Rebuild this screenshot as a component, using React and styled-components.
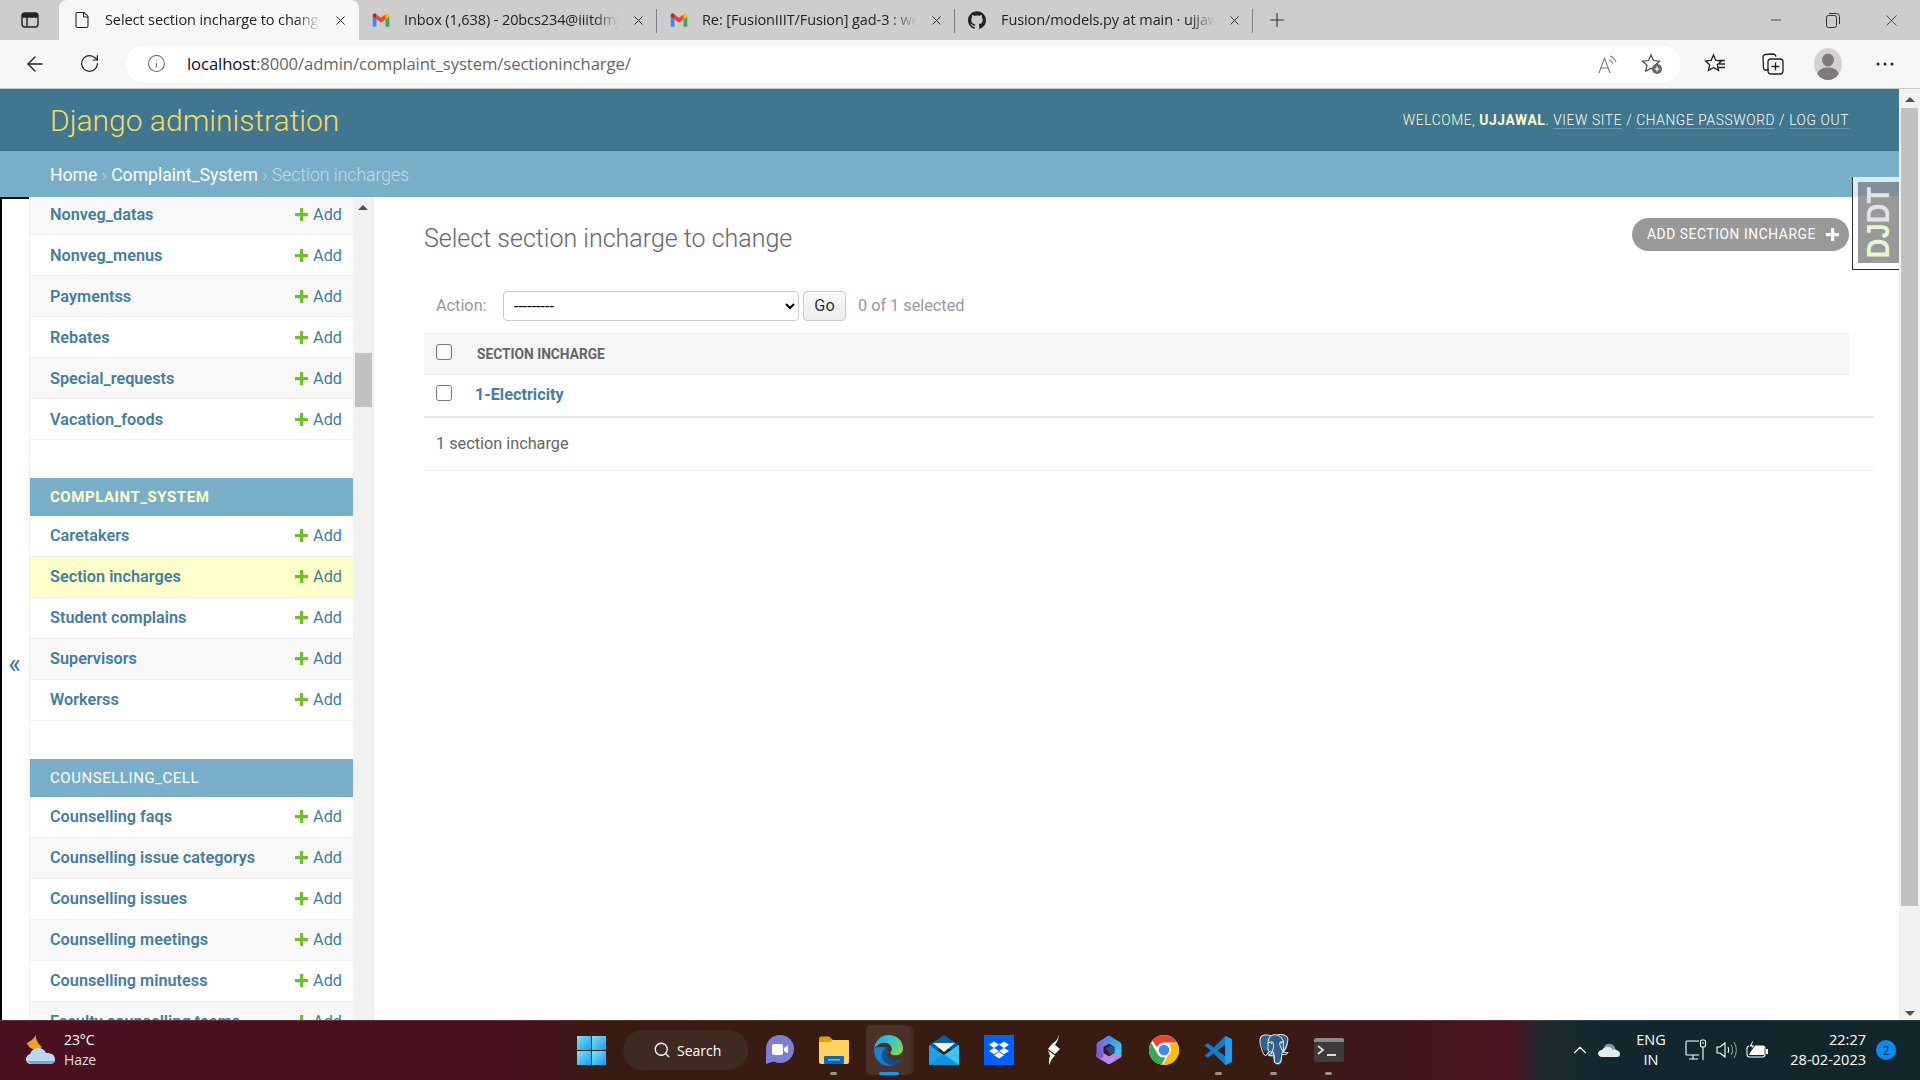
import React from "react";
import styled, { createGlobalStyle } from "styled-components";
import { ArrowLeft, RotateCw, Info, X, Plus, File, ChevronUp, Search, Minus } from "lucide-react";
import { SiGithub, SiDropbox, SiPostgresql } from "react-icons/si";

const Global = createGlobalStyle`
  html, body { margin: 0; padding: 0; width: 1920px; height: 1080px; overflow: hidden; background: #fff; }
  * { box-sizing: border-box; }
  #root { width: 1920px; height: 1080px; }
`;

const UI = `"Open Sans", "Noto Sans", sans-serif`;
const DJ = `Roboto, "Liberation Sans", sans-serif`;

const Screen = styled.div`
  position: relative;
  width: 1920px;
  height: 1080px;
  display: flex;
  flex-direction: column;
  overflow: hidden;
`;

/* browser chrome */
const TabStrip = styled.div`
  height: 40px;
  flex: none;
  background: #cdcdcd;
  display: flex;
  align-items: stretch;
  font-family: ${UI};
  font-size: 14.5px;
  letter-spacing: -0.1px;
  color: #222;
`;
const TabToggle = styled.div`
  width: 59px;
  display: flex;
  align-items: center;
  justify-content: center;
`;
const Tab = styled.div`
  position: relative;
  width: ${(p) => (p.$active ? "300px" : "298px")};
  display: flex;
  align-items: center;
  padding-left: ${(p) => (p.$active ? "14px" : "13px")};
  background: ${(p) => (p.$active ? "#f7f7f7" : "transparent")};
  border-radius: 8px 8px 0 0;
  &::after {
    content: "";
    display: ${(p) => (p.$sep ? "block" : "none")};
    position: absolute;
    right: 0;
    top: 9px;
    width: 1px;
    height: 24px;
    background: #808080;
  }
`;
const TabIcon = styled.span`
  width: 18px;
  height: 18px;
  flex: none;
  display: flex;
  align-items: center;
  justify-content: center;
`;
const TabTitle = styled.span`
  flex: 1;
  margin-left: ${(p) => (p.$wide ? 15 : 14)}px;
  padding-bottom: 2px;
  white-space: nowrap;
  overflow: hidden;
  -webkit-mask-image: linear-gradient(90deg, #000 88%, transparent 100%);
  mask-image: linear-gradient(90deg, #000 88%, transparent 100%);
`;
const TabClose = styled.span`
  width: 38px;
  flex: none;
  display: flex;
  align-items: center;
  justify-content: center;
`;
const NewTab = styled.div`
  width: 48px;
  display: flex;
  align-items: center;
  justify-content: center;
`;
const WinControls = styled.div`
  margin-left: auto;
  display: flex;
  align-items: center;
`;
const WinBtn = styled.div`
  width: 57.5px;
  display: flex;
  justify-content: center;
  &:last-child { width: 58px; }
`;

const ToolBar = styled.div`
  height: 49px;
  flex: none;
  background: #f7f7f7;
  border-bottom: 1px solid #c9c9c9;
  display: flex;
  align-items: center;
  padding-bottom: 1px;
`;
const ToolBtn = styled.div`
  width: ${(p) => p.$w || 55}px;
  flex: none;
  display: flex;
  justify-content: center;
  align-items: center;
`;
const AddressBar = styled.div`
  width: 1556px;
  height: 38px;
  margin-left: 8px;
  flex: none;
  background: #fff;
  border-radius: 19px;
  display: flex;
  align-items: center;
  padding-left: 22px;
  font-family: ${UI};
  font-size: 16.7px;
  color: #666;
  box-shadow: 0 0 2px rgba(0,0,0,.08);
`;
const UrlHost = styled.span`
  color: #111;
`;
const Url = styled.span`
  margin-left: 21px;
  letter-spacing: -0.1px;
`;
const AddressEnd = styled.div`
  margin-left: auto;
  display: flex;
  align-items: center;
  gap: 23px;
  padding-right: 18px;
`;

/* page */
const Viewport = styled.div`
  flex: 1;
  min-height: 0;
  display: flex;
`;
const Page = styled.div`
  flex: 1;
  min-width: 0;
  display: flex;
  flex-direction: column;
  font-family: ${DJ};
`;
const Header = styled.header`
  height: 62px;
  flex: none;
  background: #417690;
  display: flex;
  align-items: center;
  justify-content: space-between;
  padding: 0 50px 0 50px;
`;
const Brand = styled.h1`
  margin: 0;
  font-size: 30px;
  font-weight: 300;
  color: #f5dd5d;
`;
const UserTools = styled.div`
  font-size: 13.75px;
  font-weight: 300;
  letter-spacing: 0.625px;
  text-transform: uppercase;
  color: #ffc;
`;
const UserName = styled.strong`
  font-weight: 700;
`;
const ToolLink = styled.a`
  color: #fff;
  border-bottom: 1px solid rgba(255,255,255,.25);
`;
const Crumbs = styled.nav`
  height: 46px;
  flex: none;
  background: #79aec8;
  display: flex;
  align-items: center;
  padding: 2px 0 0 50px;
  font-size: 17.6px;
  font-weight: 300;
  color: #c4dce8;
`;
const Crumb = styled.a`
  color: #fff;
  font-weight: 400;
`;
const Body = styled.div`
  flex: 1;
  min-height: 0;
  display: flex;
  background: #fff;
`;
const NavToggle = styled.div`
  width: 29px;
  flex: none;
  border-left: 2px solid #000;
  border-top: 2px solid #000;
  display: flex;
  align-items: center;
  justify-content: center;
  padding: 110px 2px 0 0;
  color: #417690;
  font-size: 27px;
  line-height: 1;
`;
const Sidebar = styled.aside`
  width: 345px;
  flex: none;
  display: flex;
  border-left: 1px solid #eee;
  border-right: 1px solid #eaeaea;
`;
const SideList = styled.div`
  width: 323px;
  flex: none;
  overflow: hidden;
`;
const SideScroll = styled.div`
  width: 20px;
  flex: none;
  background: #f1f1f1;
  display: flex;
  flex-direction: column;
  align-items: center;
  padding-top: 8px;
`;
const ArrowUp = styled.div`
  width: 0;
  height: 0;
  border-left: 5px solid transparent;
  border-right: 5px solid transparent;
  border-bottom: 5px solid #505050;
`;
const SideThumb = styled.div`
  width: 17px;
  height: 54px;
  margin-top: 143px;
  background: #c1c1c1;
`;
const SideInner = styled.div`
  margin-top: -3px;
`;
const Module = styled.section`
  margin-bottom: 38px;
`;
const Caption = styled.div`
  height: 38px;
  display: flex;
  align-items: center;
  padding-left: 20px;
  background: #79aec8;
  font-size: 15px;
  letter-spacing: 0.55px;
  text-transform: uppercase;
  font-weight: ${(p) => (p.$current ? 700 : 400)};
  color: ${(p) => (p.$current ? "#ffc" : "#fff")};
`;
const Row = styled.div`
  height: 41px;
  display: flex;
  align-items: center;
  justify-content: space-between;
  padding: 0 11px ${(p) => (p.$lift ? "2px" : "0")} 20px;
  border-bottom: 1px solid #eee;
  background: ${(p) => (p.$current ? "#ffc" : p.$alt ? "#f8f8f8" : "#fff")};
`;
const RowName = styled.a`
  font-size: 16.25px;
  font-weight: 600;
  color: #447e9b;
`;
const RowAdd = styled.a`
  display: flex;
  align-items: center;
  gap: 5px;
  font-size: 16.25px;
  font-weight: 400;
  color: #447e9b;
`;
const Content = styled.main`
  flex: 1;
  min-width: 0;
  padding: 21px 25px 0 50px;
  display: flex;
  flex-direction: column;
`;
const TitleRow = styled.div`
  height: 33px;
  display: flex;
  align-items: center;
  justify-content: space-between;
  padding-right: 25px;
`;
const Title = styled.h1`
  margin: 0;
  padding-top: 7px;
  font-size: 25px;
  font-weight: 300;
  color: #666;
`;
const AddBtn = styled.a`
  height: 33px;
  width: 217px;
  border-radius: 17px;
  background: #999;
  color: #fff;
  display: flex;
  align-items: center;
  justify-content: space-between;
  padding: 0 10px 1px 15px;
  font-size: 13.75px;
  font-weight: 400;
  letter-spacing: 0.6px;
  text-transform: uppercase;
  white-space: nowrap;
`;
const Actions = styled.div`
  height: 30px;
  margin-top: 40px;
  display: flex;
  align-items: center;
  padding-left: 12px;
  font-size: 16.25px;
  color: #999;
`;
const ActionLabel = styled.span`
  width: 67px;
  flex: none;
  padding-bottom: 2px;
`;
const ActionSelect = styled.select`
  width: 296px;
  height: 30px;
  flex: none;
  background: #fff;
  border: 1px solid #ccc;
  border-radius: 4px;
  padding: 0 6px;
  font-family: ${DJ};
  font-size: 16px;
  color: #000;
`;
const GoBtn = styled.button`
  width: 43px;
  height: 30px;
  margin-left: 4px;
  flex: none;
  border: 1px solid #ccc;
  border-radius: 4px;
  background: linear-gradient(#f8f8f8, #ececec);
  font-family: ${DJ};
  font-size: 16.25px;
  color: #333;
  padding: 0 0 2px;
`;
const Selected = styled.span`
  margin-left: 12px;
  padding-bottom: 2px;
`;
const Results = styled.div`
  margin-top: 12px;
  border-bottom: 2px solid #e6e6e6;
`;
const HeadRow = styled.div`
  height: 42px;
  margin-right: 25px;
  background: #f6f6f6;
  border-top: 1px solid #eee;
  border-bottom: 1px solid #eee;
  display: flex;
  align-items: center;
  padding: 0 0 0 12px;
  font-size: 13.75px;
  font-weight: 700;
  color: #666;
  text-transform: uppercase;
`;
const BodyRow = styled.div`
  height: 41px;
  margin-right: 25px;
  display: flex;
  align-items: center;
  padding: 0 0 2px 12px;
`;
const Check = styled.input.attrs({ type: "checkbox" })`
  width: 16px;
  height: 16px;
  margin: -4px 0 0 0;
  flex: none;
`;
const HeadLabel = styled.span`
  margin-left: 25px;
`;
const EntryLink = styled.a`
  margin-left: 23px;
  font-size: 16.25px;
  font-weight: 700;
  color: #447e9b;
`;
const Paginator = styled.div`
  height: 53px;
  display: flex;
  align-items: center;
  padding: 0 0 2px 12px;
  border-bottom: 1px solid #eee;
  font-size: 16.25px;
  color: #666;
`;
const PageScroll = styled.div`
  width: 21px;
  flex: none;
  background: #f1f1f1;
  display: flex;
  flex-direction: column;
  align-items: center;
  padding-top: 8px;
`;
const PageThumb = styled.div`
  width: 17px;
  height: 798px;
  margin-top: 6px;
  background: #c1c1c1;
`;
const ArrowDown = styled.div`
  width: 0;
  height: 0;
  margin-top: auto;
  margin-bottom: 4px;
  border-left: 5px solid transparent;
  border-right: 5px solid transparent;
  border-top: 5px solid #505050;
`;
const DjHandle = styled.div`
  position: absolute;
  left: 1852px;
  top: 177px;
  width: 47px;
  height: 93px;
  padding: 5px 0 6px 5px;
  background: rgba(255,255,255,.75);
  border-left: 1px solid #333;
  border-bottom: 1px solid #333;
`;
const DjInner = styled.div`
  height: 100%;
  background: linear-gradient(#7f9099 0, #7f9099 14px, #999 14px);
  display: flex;
  align-items: center;
  justify-content: center;
  overflow: hidden;
`;
const DjText = styled.div`
  transform: rotate(-90deg) scaleX(0.88);
  font-family: "Liberation Sans", sans-serif;
  font-weight: 700;
  font-size: 31px;
  line-height: 1;
  white-space: nowrap;
  color: #dfe5e8;
`;
const DjGreen = styled.span`
  color: #e6f7d3;
`;

/* taskbar */
const Taskbar = styled.footer`
  height: 60px;
  flex: none;
  display: flex;
  align-items: center;
  color: #fff;
  font-family: ${UI};
  background: linear-gradient(90deg, #4a1120 0, #4a1120 500px, #47131c 540px, #3b1b14 600px, #381c12 800px, #381c12 1250px, #40171a 1380px, #4a1420 1510px, #1e2a32 1545px, #12282e 1600px, #12262c 1920px);
  box-shadow: inset 0 1px 0 rgba(255,255,255,.12);
`;
const Weather = styled.div`
  flex: 0 0 577px;
  display: flex;
  align-items: center;
  padding-left: 25px;
`;
const WeatherText = styled.div`
  margin-left: 7px;
  font-size: 14px;
  letter-spacing: -0.1px;
  line-height: 20px;
`;
const WeatherSub = styled.div`
  color: #e4dcdc;
`;
const WinLogo = styled.div`
  width: 29px;
  height: 29px;
  flex: none;
  display: grid;
  grid-template-columns: 1fr 1fr;
  gap: 1px;
`;
const WinPane = styled.span`
  background: linear-gradient(135deg, #7fe0f7, #0f9ff0);
`;
const SearchPill = styled.div`
  width: 125px;
  height: 40px;
  margin-left: 17px;
  margin-right: 3px;
  flex: none;
  border-radius: 20px;
  background: #3f2b22;
  display: flex;
  align-items: center;
  padding-left: 30px;
  gap: 6px;
  font-size: 14px;
`;
const Slot = styled.div`
  position: relative;
  width: 55px;
  height: 60px;
  flex: none;
  display: flex;
  align-items: center;
  justify-content: center;
`;
const ActiveBox = styled.div`
  position: absolute;
  left: 5px;
  top: 5px;
  width: 44px;
  height: 50px;
  border-radius: 5px;
  background: #4a3229;
  box-shadow: 5px 0 0 -1px #43291f;
`;
const SlotIcon = styled.div`
  position: relative;
  display: flex;
`;
const Dot = styled.span`
  position: absolute;
  left: 50%;
  bottom: 5px;
  width: ${(p) => (p.$active ? 20 : 7)}px;
  height: 3px;
  margin-left: ${(p) => (p.$active ? -10 : -4)}px;
  border-radius: 2px;
  background: ${(p) => (p.$active ? "#0a9bf5" : "#9a928c")};
`;
const Tray = styled.div`
  margin-left: auto;
  display: flex;
  align-items: center;
  padding-right: 24px;
`;
const TrayItem = styled.div`
  width: ${(p) => p.$w}px;
  flex: none;
  display: flex;
  align-items: center;
  justify-content: center;
`;
const TrayText = styled.div`
  width: ${(p) => p.$w}px;
  flex: none;
  font-size: 14.5px;
  line-height: 20px;
  white-space: nowrap;
  text-align: ${(p) => p.$align};
`;
const Badge = styled.div`
  width: 20px;
  height: 20px;
  margin-left: 10px;
  border-radius: 50%;
  background: #0b8cf2;
  color: #06233a;
  font-size: 12px;
  display: flex;
  align-items: center;
  justify-content: center;
`;

/* drawings */
const GreenPlus = ({ color = "#70bf2b", s = 13 }) => (
  <svg width={s} height={s} viewBox="0 0 13 13"><path fill={color} d="M5 0h3.2v5H13v3.2H8.2V13H5V8.2H0V5h5z" /></svg>
);
const Gmail = () => (
  <svg width="20" height="16" viewBox="0 0 24 19">
    <path fill="#4285f4" d="M1 18.5h5V8.5L1 5z" />
    <path fill="#34a853" d="M18 18.5h5V5l-5 3.5z" />
    <path fill="#fbbc04" d="M18 2v6.5L23 5V3c0-2-2.400-3-4-1.800z" />
    <path fill="#ea4335" d="M6 8.500V2l6 4.500L18 2v6.500l-6 4.500z" />
    <path fill="#c5221f" d="M1 3v2l5 3.500V2L5 1.200C3.400 0 1 1 1 3z" />
  </svg>
);
const TabsIcon = () => (
  <svg width="18" height="18" viewBox="0 0 18 18" fill="none" stroke="#222" strokeWidth="1.4">
    <rect x="1" y="2" width="16" height="14" rx="3" />
    <path d="M6 2.500v13" />
    <path fill="#222" d="M2 3h14v3H2z" />
  </svg>
);
const Restore = () => (
  <svg width="14" height="15" viewBox="0 0 14 15" fill="none" stroke="#333" strokeWidth="1">
    <rect x="0.500" y="2.500" width="10" height="12" rx="2" />
    <path d="M3 .5h7.500a3 3 0 0 1 3 3V11" />
  </svg>
);
const ReadAloud = () => (
  <svg width="20" height="20" viewBox="0 0 20 20" fill="none" stroke="#777" strokeWidth="1.100">
    <path d="M1 19 6.500 4l5.500 15M3 14h7" />
    <path d="M12 2c3 1 5 3 6 6M11 6c2 .5 3 1.500 4 3.500" />
  </svg>
);
const FavAdd = () => (
  <svg width="22" height="22" viewBox="0 0 22 22">
    <path fill="none" stroke="#444" strokeWidth="1.200" d="M10 2l2.500 5.500 6 .7-4.400 4 1.200 6L10 15.300 4.800 18.200 6 12.200 1.500 8.200l6-.7z" />
    <circle cx="16" cy="16" r="5" fill="#666" />
    <path stroke="#fff" strokeWidth="1.200" d="M16 13.500v5M13.500 16h5" />
  </svg>
);
const Favs = () => (
  <svg width="22" height="22" viewBox="0 0 22 22" fill="none" stroke="#222" strokeWidth="1.300">
    <path d="M9.500 2l2.300 5.300 5.700.6-4.200 3.800 1.200 5.700-5-3-5 3 1.200-5.700L1.500 7.900l5.700-.6z" />
    <path d="M14 7.500h7M15 11h6M14 14.500h7" />
  </svg>
);
const Collections = () => (
  <svg width="22" height="22" viewBox="0 0 22 22" fill="none" stroke="#222" strokeWidth="1.300">
    <path d="M7 17 3.500 17C2 17 1.500 16 1.500 15L1 4c0-1.500 1-2.500 2.500-2.500L11 1c1.500 0 2.500 1 3 2.500" />
    <rect x="6" y="6" width="15" height="15" rx="3" />
    <path d="M13.500 9.500v8M9.500 13.500h8" />
  </svg>
);
const Profile = () => (
  <svg width="28" height="32" viewBox="0 0 28 32">
    <ellipse cx="14" cy="16" rx="14" ry="16" fill="#d4d2ce" />
    <ellipse cx="14" cy="12" rx="6" ry="6.500" fill="#807b78" />
    <path fill="#807b78" d="M3.500 26c1-5 5-6.500 10.500-6.500S23.500 21 24.500 26C22 30 18 32 14 32S6 30 3.500 26z" />
  </svg>
);
const Dots = () => (
  <svg width="18" height="4" viewBox="0 0 18 4" fill="#222"><circle cx="2" cy="2" r="1.500" /><circle cx="9" cy="2" r="1.500" /><circle cx="16" cy="2" r="1.500" /></svg>
);
const WeatherIcon = () => (
  <svg width="32" height="32" viewBox="0 0 32 32">
    <path fill="#f2a11e" d="M11 0c-1 4-5 7-9 9 1 4 5 7 11 7l4-3c-4-3-7-8-6-13z" />
    <path fill="#bcd6f2" d="M6 30c-3 0-5-2-5-5 0-2.500 2-4.500 4-5 1-3 4-6 8-6 4 0 7 2 8 5 4-.5 9 1.500 9 6 0 3-2 5-5 5z" />
    <path fill="#7fa3d6" d="M2 27c2 2 4 3 6 3h17c2 0 4-1 5-3z" />
  </svg>
);
const TeamsIcon = () => (
  <svg width="30" height="30" viewBox="0 0 30 30">
    <circle cx="16" cy="14" r="14" fill="#7b7fd8" />
    <path fill="#7b7fd8" d="M2 16v13l9-3z" />
    <rect x="8" y="9" width="11" height="11" rx="2" fill="#fff" />
    <path fill="#fff" d="M20 13l4-2.500v8L20 16z" />
  </svg>
);
const FolderIcon = () => (
  <svg width="30" height="28" viewBox="0 0 30 28">
    <path fill="#e0a100" d="M0 3c0-1.500 1-2.500 2-2.500h8L14 4h16v4H0z" />
    <path fill="#fcd45d" d="M0 6h11l3-2h14c1 0 2 1 2 2v20c0 1-1 2-2 2H2c-1 0-2-1-2-2z" />
    <rect x="5" y="20" width="20" height="8" rx="1" fill="#0c69b0" />
    <rect x="9" y="23" width="12" height="1.600" fill="#5db8f0" />
  </svg>
);
const EdgeIcon = () => (
  <svg width="31" height="31" viewBox="0 0 32 32">
    <defs>
      <linearGradient id="eA" x1="0" y1="0" x2="1" y2="0.600"><stop offset="0" stopColor="#1aa3e0" /><stop offset="0.550" stopColor="#37c6d0" /><stop offset="1" stopColor="#7ad84f" /></linearGradient>
      <linearGradient id="eB" x1="0" y1="0" x2="0.600" y2="1"><stop offset="0" stopColor="#1087d8" /><stop offset="1" stopColor="#0d7bc7" /></linearGradient>
    </defs>
    <path fill="url(#eB)" d="M1 15C1 25 8 32 17 32c2 0 4-.5 6-1.500C16 31 10 26 10 20c0-3 2-6 4-7C8 12 3 12 1 15z" />
    <path fill="#0e4f94" d="M14 13c-3 1-5 4-5 8 0 6 6 10.500 13 10 3-1 6-3 8-6.500-3 2-7 2.500-10 1-4-1.500-6-5-5-8 .5-1.500 1-3 -1-4.500z" />
    <path fill="url(#eA)" d="M1 15C2 6 8 0 16 0c9 0 15 6 15 14 0 4-3 7-7.500 7-3 0-5.500-1-5.500-2.500 0-1.500 1.500-1.500 1.500-4C19.500 11 16 8 12 8 7 8 3 11 1 15z" />
  </svg>
);
const MailIcon = () => (
  <svg width="30" height="30" viewBox="0 0 30 30">
    <path fill="#0b5ea8" d="M0 10 15 0l15 10v4H0z" />
    <path fill="#f5f5f5" d="M4 8h22l-11 9z" />
    <path fill="#1aa3e8" d="M0 10l15 10 15-10v20H0z" />
    <path fill="#38c6f5" d="M30 10v20L15 20z" />
    <path fill="#0e84d4" d="M0 30l15-11 15 11z" opacity=".55" />
  </svg>
);
const SwordIcon = () => (
  <svg width="14" height="32" viewBox="0 0 14 32" fill="#fff">
    <path d="M12 0C11 4 10 7 5 10L1 15l7 5 5-5-5-4C10 8 12 4 12 0z" />
    <path d="M1 16.500l7 5c-3 3-5 6-6 10 0-4 0-7 1-10z" />
  </svg>
);
const OfficeIcon = () => (
  <svg width="28" height="30" viewBox="0 0 28 30" fill="none" strokeWidth="7" strokeLinecap="round" strokeLinejoin="round">
    <defs>
      <linearGradient id="oA" x1="0" y1="0" x2="1" y2="1"><stop offset="0" stopColor="#3f8fe8" /><stop offset="1" stopColor="#3fc4ea" /></linearGradient>
      <linearGradient id="oB" x1="0" y1="1" x2="1" y2="0"><stop offset="0" stopColor="#8258d8" /><stop offset="1" stopColor="#6f8ce8" /></linearGradient>
    </defs>
    <path stroke="#b88ae6" d="M5 20l9 5.500 9-5.500" />
    <path stroke="url(#oB)" d="M5 20V10l9-5.500" />
    <path stroke="url(#oA)" d="M14 4.500l9 5.500v7" />
    <path fill="#1d4f96" stroke="none" d="M11 13l5-2.500 3 2v5l-4 2.500z" />
  </svg>
);
const ChromeIcon = () => (
  <svg width="30" height="30" viewBox="0 0 48 48">
    <circle cx="24" cy="24" r="24" fill="#fff" />
    <path fill="#ea4335" d="M24 0a24 24 0 0 1 20.800 12H24a12 12 0 0 0-11.300 8L5.200 8.500A24 24 0 0 1 24 0z" />
    <path fill="#34a853" d="M3.200 12 13.600 30a12 12 0 0 0 13.200 5.700L19.500 47.600A24 24 0 0 1 3.200 12z" />
    <path fill="#fbbc04" d="M44.800 12A24 24 0 0 1 22 48l10.400-18a12 12 0 0 0-.4-14z" />
    <circle cx="24" cy="24" r="11" fill="#fff" />
    <circle cx="24" cy="24" r="8.500" fill="#4285f4" />
  </svg>
);
const CodeIcon = () => (
  <svg width="31" height="31" viewBox="0 0 32 32">
    <path fill="#0a7fd0" fillRule="evenodd" d="M23 1 11 13 5 8.500 1.500 10.500 8 16l-6.500 5.500L5 23.500 11 19l12 12 7-3.500V4.500zM23 10l-8 6 8 6z" />
    <path fill="#1f9cf0" d="M23 1l7 3.500v23L23 31z" />
  </svg>
);
const PgIcon = () => (
  <svg width="30" height="32" viewBox="0 0 30 32">
    <path fill="#33618f" d="M4 1c5-1 7 0 9 1 3-1 8-2 13 0 3 2 4 7 2 12-1 3-3 5-5 5v7c0 3-2 6-5 5-3-1-3-4-3-7-3 0-6-3-7-6-3 0-6-6-7-11C0 3 2 1 4 1z" />
    <foreignObject x="0" y="0" width="30" height="32">
      <SiPostgresql size={30} color="#f4f6f8" />
    </foreignObject>
  </svg>
);
const TerminalIcon = () => (
  <svg width="30" height="24" viewBox="0 0 30 24">
    <rect width="30" height="24" rx="2" fill="#3c3c3c" />
    <path d="M0 2a2 2 0 0 1 2-2h26a2 2 0 0 1 2 2v2H0z" fill="#8a8a8a" />
    <path d="M4 8l5 4-5 4" fill="none" stroke="#ddd" strokeWidth="1.800" />
    <rect x="13" y="16" width="9" height="2" fill="#ddd" />
  </svg>
);
const CloudIcon = () => (
  <svg width="22" height="14" viewBox="0 0 22 14">
    <path fill="#8f9a9e" d="M6 4a6 6 0 0 1 11 1l1 2-8 2z" />
    <path fill="#e8eced" d="M4 14c-2 0-4-1.500-4-3.500S2 7 4 7c1-2 3-3 6-3 2 0 4 1 5 3 3-1 7 1 7 4 0 2-1 3-3 3z" />
  </svg>
);
const NetworkIcon = () => (
  <svg width="22" height="22" viewBox="0 0 22 22" fill="none" stroke="#fff" strokeWidth="1.100">
    <path d="M14 2H2a1 1 0 0 0-1 1v12a1 1 0 0 0 1 1h12M8 16v4M4 20h9" />
    <rect x="15.500" y="1" width="5" height="7" rx="1.500" />
    <path d="M18 8v13M17 4h2" />
  </svg>
);
const VolumeIcon = () => (
  <svg width="22" height="20" viewBox="0 0 22 20" fill="none" stroke="#fff" strokeWidth="1.100">
    <path d="M1 7h3l5-4v14l-5-4H1z" />
    <path d="M12 7c1 2 1 4 0 6" />
    <path stroke="#8a9598" d="M15 5c2 3 2 7 0 10M18 2c3 5 3 11 0 16" />
  </svg>
);
const BatteryIcon = () => (
  <svg width="22" height="18" viewBox="0 0 22 18">
    <rect x="1" y="5" width="18" height="11" rx="2.500" fill="none" stroke="#fff" strokeWidth="1.100" />
    <path fill="#fff" d="M20 8h2v5h-2zM3 14l4-9h11v9z" />
    <path fill="#fff" stroke="#12282e" d="M6 0 3 6h3L4 11l5-7H6l2-4z" />
  </svg>
);

const MODULES = [
  { rows: ["Nonveg_datas", "Nonveg_menus", "Paymentss", "Rebates", "Special_requests", "Vacation_foods"], altFirst: true },
  { name: "Complaint_System", current: true, rows: ["Caretakers", "Section incharges", "Student complains", "Supervisors", "Workerss"] },
  { name: "Counselling_Cell", rows: ["Counselling faqs", "Counselling issue categorys", "Counselling issues", "Counselling meetings", "Counselling minutess", "Faculty counselling teams"] },
];

const TABS = [
  { title: "Select section incharge to change", icon: <File size={18} color="#222" strokeWidth={1.4} />, active: true },
  { title: "Inbox (1,638) - 20bcs234@iiitdmj.ac.in", icon: <Gmail />, sep: true },
  { title: "Re: [FusionIIIT/Fusion] gad-3 : web", icon: <Gmail />, sep: true },
  { title: "Fusion/models.py at main · ujjawal", icon: <SiGithub size={20} color="#222" />, sep: true, wide: true },
];

const SLOTS = [
  { key: "teams", icon: <TeamsIcon /> },
  { key: "folder", icon: <FolderIcon />, dot: true },
  { key: "edge", icon: <EdgeIcon />, active: true },
  { key: "mail", icon: <MailIcon /> },
  { key: "dropbox", icon: <SiDropbox size={30} color="#fff" style={{ background: "#0061fe", padding: 5 }} /> },
  { key: "sword", icon: <SwordIcon /> },
  { key: "office", icon: <OfficeIcon /> },
  { key: "chrome", icon: <ChromeIcon /> },
  { key: "code", icon: <CodeIcon />, dot: true },
  { key: "pg", icon: <PgIcon />, dot: true },
  { key: "term", icon: <TerminalIcon />, dot: true },
];

export default function App() {
  return (
    <Screen>
      <Global />
      <TabStrip>
        <TabToggle><TabsIcon /></TabToggle>
        {TABS.map((t) => (
          <Tab key={t.title} $active={t.active} $sep={t.sep}>
            <TabIcon>{t.icon}</TabIcon>
            <TabTitle $wide={t.wide}>{t.title}</TabTitle>
            <TabClose><X size={15} color="#222" strokeWidth={1.500} /></TabClose>
          </Tab>
        ))}
        <NewTab><Plus size={22} color="#333" strokeWidth={1.200} /></NewTab>
        <WinControls>
          <WinBtn><Minus size={16} color="#333" strokeWidth={1.200} /></WinBtn>
          <WinBtn><Restore /></WinBtn>
          <WinBtn><X size={19} color="#333" strokeWidth={1.100} /></WinBtn>
        </WinControls>
      </TabStrip>
      <ToolBar>
        <ToolBtn $w={69}><ArrowLeft size={24} color="#222" strokeWidth={1.400} /></ToolBtn>
        <ToolBtn $w={41}><RotateCw size={21} color="#222" strokeWidth={1.400} /></ToolBtn>
        <ToolBtn $w={7} />
        <AddressBar>
          <Info size={19} color="#666" strokeWidth={1.300} />
          <Url><UrlHost>localhost</UrlHost>:8000/admin/complaint_system/sectionincharge/</Url>
          <AddressEnd><ReadAloud /><FavAdd /></AddressEnd>
        </AddressBar>
        <ToolBtn $w={68}><Favs /></ToolBtn>
        <ToolBtn $w={47}><Collections /></ToolBtn>
        <ToolBtn $w={64}><Profile /></ToolBtn>
        <ToolBtn $w={49}><Dots /></ToolBtn>
      </ToolBar>
      <Viewport>
        <Page>
          <Header>
            <Brand>Django administration</Brand>
            <UserTools>
              Welcome, <UserName>ujjawal</UserName>. <ToolLink>View site</ToolLink> / <ToolLink>Change password</ToolLink> / <ToolLink>Log out</ToolLink>
            </UserTools>
          </Header>
          <Crumbs>
            <Crumb>Home</Crumb>&nbsp;›&nbsp;<Crumb>Complaint_System</Crumb>&nbsp;›&nbsp;Section incharges
          </Crumbs>
          <Body>
            <NavToggle>«</NavToggle>
            <Sidebar>
              <SideList>
                <SideInner>
                  {MODULES.map((m, mi) => (
                    <Module key={mi}>
                      {m.name && <Caption $current={m.current}>{m.name}</Caption>}
                      {m.rows.map((r, i) => (
                        <Row key={r} $lift={!!m.name} $alt={m.altFirst ? i % 2 === 0 : i % 2 === 1} $current={r === "Section incharges"}>
                          <RowName>{r}</RowName>
                          <RowAdd><GreenPlus />Add</RowAdd>
                        </Row>
                      ))}
                    </Module>
                  ))}
                </SideInner>
              </SideList>
              <SideScroll><ArrowUp /><SideThumb /></SideScroll>
            </Sidebar>
            <Content>
              <TitleRow>
                <Title>Select section incharge to change</Title>
                <AddBtn>Add section incharge <GreenPlus color="#fff" /></AddBtn>
              </TitleRow>
              <Actions>
                <ActionLabel>Action:</ActionLabel>
                <ActionSelect defaultValue=""><option value="">---------</option></ActionSelect>
                <GoBtn>Go</GoBtn>
                <Selected>0 of 1 selected</Selected>
              </Actions>
              <Results>
                <HeadRow><Check /><HeadLabel>Section incharge</HeadLabel></HeadRow>
                <BodyRow><Check /><EntryLink>1-Electricity</EntryLink></BodyRow>
              </Results>
              <Paginator>1 section incharge</Paginator>
            </Content>
          </Body>
        </Page>
        <PageScroll><ArrowUp /><PageThumb /><ArrowDown /></PageScroll>
      </Viewport>
      <DjHandle>
        <DjInner><DjText><DjGreen>DJ</DjGreen>DT</DjText></DjInner>
      </DjHandle>
      <Taskbar>
        <Weather>
          <WeatherIcon />
          <WeatherText>23°C<WeatherSub>Haze</WeatherSub></WeatherText>
        </Weather>
        <WinLogo><WinPane /><WinPane /><WinPane /><WinPane /></WinLogo>
        <SearchPill><Search size={18} color="#fff" strokeWidth={1.700} />Search</SearchPill>
        {SLOTS.map((s) => (
          <Slot key={s.key}>
            {s.active && <ActiveBox />}
            <SlotIcon>{s.icon}</SlotIcon>
            {(s.dot || s.active) && <Dot $active={s.active} />}
          </Slot>
        ))}
        <Tray>
          <TrayItem $w={30}><ChevronUp size={22} color="#fff" strokeWidth={1.200} /></TrayItem>
          <TrayItem $w={28}><CloudIcon /></TrayItem>
          <TrayText $w={56} $align="center">ENG<br />IN</TrayText>
          <TrayItem $w={34}><NetworkIcon /></TrayItem>
          <TrayItem $w={28}><VolumeIcon /></TrayItem>
          <TrayItem $w={32}><BatteryIcon /></TrayItem>
          <TrayText $w={93} $align="right">22:27<br />28-02-2023</TrayText>
          <Badge>2</Badge>
        </Tray>
      </Taskbar>
    </Screen>
  );
}
